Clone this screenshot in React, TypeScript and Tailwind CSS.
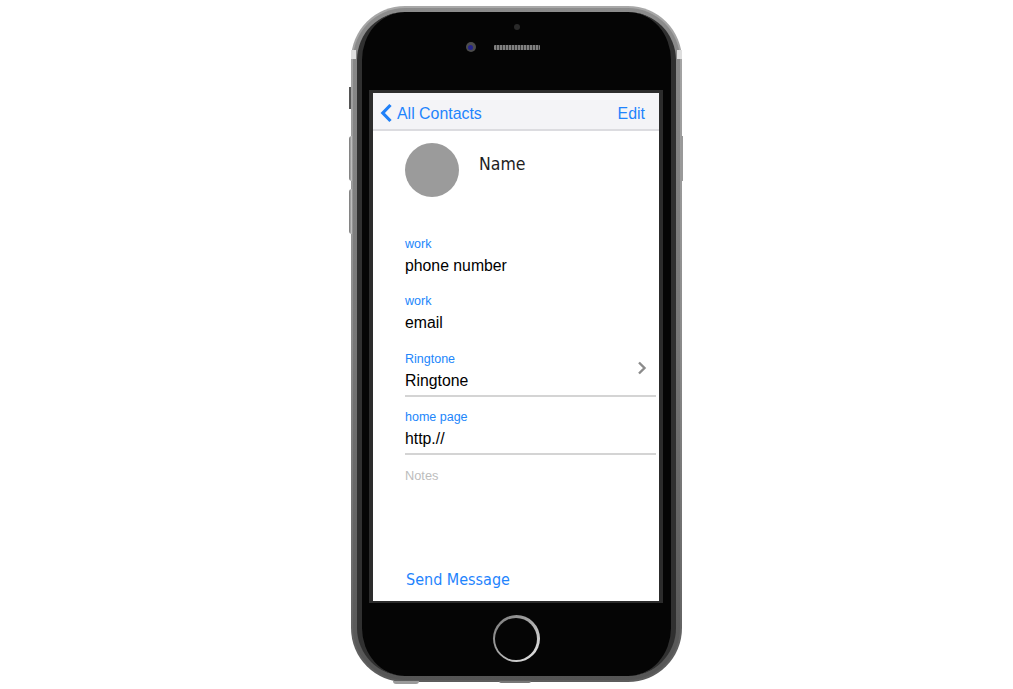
import React from 'react';

const Field = ({ label, value, lineHeight, chevron, mt }: { label: string; value: string; lineHeight?: string; chevron?: boolean; mt: string }) => (
  <div className={`relative ${mt} ${lineHeight ? `${lineHeight} border-b-2 border-[#d4d4d4]` : ''}`}>
    <div className="text-[12.5px] leading-[16px] text-[#2286fb]">{label}</div>
    <div className="mt-[4px] text-[15.8px] leading-[20px] text-black">{value}</div>
    {chevron && (
      <svg className="absolute right-[9px] top-[10px]" width="10" height="14" viewBox="0 0 10 14" fill="none">
        <path d="M2 1.5 L7.5 7 L2 12.5" stroke="#8b8b8b" strokeWidth="2.4" />
      </svg>
    )}
  </div>
);

export default function App() {
  return (
    <div className="w-[1013px] h-[689px] bg-white overflow-hidden flex justify-center pt-[6px] font-['Liberation_Sans',sans-serif]">
      <div className="relative w-[331px] h-[676px] ml-[19px] shrink-0">
        {/* side buttons */}
        <div className="absolute left-[-2px] top-[81px] w-[2px] h-[22px] bg-[#555]" />
        <div className="absolute left-[-2px] top-[130px] w-[3px] h-[45px] rounded-l-sm bg-gradient-to-r from-[#777] to-[#ccc]" />
        <div className="absolute left-[-2px] top-[183px] w-[3px] h-[45px] rounded-l-sm bg-gradient-to-r from-[#777] to-[#ccc]" />
        <div className="absolute right-[-1px] top-[130px] w-[2px] h-[45px] bg-[#999]" />
        {/* bottom lobes */}
        <div className="absolute bottom-[-2px] left-[42px] w-[26px] h-[3px] rounded-b-full bg-[#9a9a9a]" />
        <div className="absolute bottom-[-1px] left-[148px] w-[32px] h-[2px] rounded-b-sm bg-[#777]" />

        <div className="h-full rounded-[54px] p-[2px] bg-gradient-to-b from-[#a8a8a8] via-[#8a8a8a] to-[#5c5c5c]">
          <div className="h-full rounded-[52px] p-[4px] bg-gradient-to-b from-[#8c8c8c] via-[#777] to-[#555]">
            <div className="relative h-full rounded-[48px] border-x-[5px] border-y-0 border-[#303030] bg-[#050505] flex flex-col items-center">
              {/* antenna bands */}
              <div className="absolute top-[38px] left-[-11px] w-[5px] h-[9px] bg-[#dedede]" />
              <div className="absolute top-[38px] right-[-11px] w-[5px] h-[9px] bg-[#dedede]" />

              {/* earpiece, camera, sensor */}
              <div className="absolute top-[12px] left-[152px] w-[6px] h-[6px] rounded-full bg-[#2a2a2a]" />
              <div className="absolute top-[30px] left-[104px] w-[10px] h-[10px] rounded-full bg-[#4c4c4c] flex items-center justify-center">
                <div className="w-[5px] h-[5px] rounded-full bg-[#24248c]" />
              </div>
              <div className="absolute top-[33px] left-[132px] w-[46px] h-[5px] rounded-[1px] bg-[repeating-linear-gradient(90deg,#808080_0,#808080_2px,#3a3a3a_2px,#3a3a3a_3px)]" />

              {/* screen */}
              <div className="mt-[78px] w-[294px] h-[513px] shrink-0 border-x-[4px] border-t-[3px] border-b-[2px] border-[#2c2c2c] bg-white flex flex-col">
                <div className="h-[38px] shrink-0 bg-[#f4f4f7] border-b-2 border-[#dcdce0] flex items-center justify-between pt-[5px] pl-[7px] pr-[14px] text-[15.9px] text-[#1f84fd]">
                  <div className="flex items-center">
                    <svg width="12" height="20" viewBox="0 0 12 20" fill="none">
                      <path d="M10.5 2 L2.8 10 L10.5 18" stroke="#1f80f8" strokeWidth="3.2" />
                    </svg>
                    <span className="ml-[5px]">All Contacts</span>
                  </div>
                  <span>Edit</span>
                </div>

                <div className="flex-1 flex flex-col pl-[32px] pr-[3px]">
                  <div className="flex mt-[12px]">
                    <div className="w-[54px] h-[54px] rounded-full bg-[#9b9b9b]" />
                    <div className="ml-[20px] mt-[10px] text-[17.5px] leading-[22px] text-[#1e1e1e] font-['DejaVu_Sans_Condensed','DejaVu_Sans',sans-serif]">Name</div>
                  </div>
                  <Field mt="mt-[39px]" label="work" value="phone number" />
                  <Field mt="mt-[17px]" label="work" value="email" />
                  <Field mt="mt-[18px]" label="Ringtone" value="Ringtone" lineHeight="h-[46px]" chevron />
                  <Field mt="mt-[12px]" label="home page" value="http.//" lineHeight="h-[46px]" />
                  <div className="mt-[13px] text-[12.8px] leading-[16px] text-[#bdbdbd]">Notes</div>
                  <div className="mt-auto mb-[10px] ml-[1px] text-[16px] leading-[22px] text-[#1f84fd] font-['DejaVu_Sans_Condensed','DejaVu_Sans',sans-serif]">Send Message</div>
                </div>
              </div>

              {/* home button */}
              <div className="mt-[12px] w-[47px] h-[47px] rounded-full p-[2.5px] bg-gradient-to-br from-[#777] via-[#aaa] to-[#eee]">
                <div className="w-full h-full rounded-full bg-[#050505]" />
              </div>
            </div>
          </div>
        </div>
      </div>
    </div>
  );
}
